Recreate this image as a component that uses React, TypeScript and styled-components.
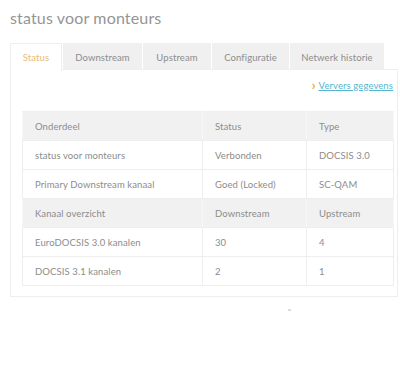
import styled, { createGlobalStyle } from "styled-components";

const GlobalStyle = createGlobalStyle`
  body {
    margin: 0;
    background: #ffffff;
    font-family: Lato, "Open Sans", sans-serif;
  }
`;

const Page = styled.div`
  padding: 8px 2px 0 10px;
  width: 400px;
  box-sizing: border-box;
`;

const Title = styled.h1`
  margin: 0 0 16px;
  font-size: 16px;
  font-weight: 400;
  color: #959595;
  line-height: 19px;
  letter-spacing: 0.15px;
`;

const TabBar = styled.div`
  display: flex;
  gap: 1px;
  height: 27px;
`;

const Tab = styled.div<{ $active?: boolean; $w: number }>`
  width: ${({ $w }) => $w}px;
  box-sizing: border-box;
  display: flex;
  align-items: center;
  justify-content: center;
  font-size: 9.5px;
  letter-spacing: 0.1px;
  color: ${({ $active }) => ($active ? "#e6bc78" : "#8c8c8c")};
  background: ${({ $active }) => ($active ? "#ffffff" : "#f0f0f0")};
  border: 1px solid ${({ $active }) => ($active ? "#eeeeee" : "#f0f0f0")};
  border-bottom: none;
  position: relative;
  z-index: 1;
  height: ${({ $active }) => ($active ? "28px" : "27px")};
`;

const Panel = styled.div`
  border: 1px solid #eeeeee;
  margin-top: -1px;
  padding: 8px 4px 10px 11px;
  width: 388px;
  box-sizing: border-box;
  height: 228px;
`;

const LinkRow = styled.div`
  display: flex;
  justify-content: flex-end;
  align-items: center;
  gap: 3px;
  height: 14px;
  margin-bottom: 19px;
`;

const Chevron = styled.span`
  color: #e8a33d;
  font-size: 13px;
  font-weight: 700;
  line-height: 1;
`;

const Refresh = styled.a`
  color: #55b8d0;
  font-size: 9.5px;
  letter-spacing: 0.1px;
  text-decoration: underline;
  cursor: pointer;
`;

const Table = styled.table`
  width: 371px;
  border-collapse: collapse;
  table-layout: fixed;
  font-size: 9.5px;
  letter-spacing: 0.1px;
  color: #8c8c8c;
`;

const Row = styled.tr<{ $head?: boolean }>`
  height: 29px;
  background: ${({ $head }) => ($head ? "#f1f1f1" : "#ffffff")};
`;

const Cell = styled.td<{ $head?: boolean }>`
  padding: 0 12px;
  border: 1px solid ${({ $head }) => ($head ? "#f7f7f7" : "#eeeeee")};
  border-top-color: #eeeeee;
  border-bottom-color: #eeeeee;
  white-space: nowrap;
`;

const Col = styled.col<{ $w: number }>`
  width: ${({ $w }) => $w}px;
`;

const Dot = styled.div`
  margin: 12px 0 0 278px;
  width: 3px;
  height: 2px;
  background: #dddddd;
`;

const tabs = [
  { label: "Status", w: 52, active: true },
  { label: "Downstream", w: 79 },
  { label: "Upstream", w: 68 },
  { label: "Configuratie", w: 77 },
  { label: "Netwerk historie", w: 94 },
];

const rows = [
  { head: true, cells: ["Onderdeel", "Status", "Type"] },
  { cells: ["status voor monteurs", "Verbonden", "DOCSIS 3.0"] },
  { cells: ["Primary Downstream kanaal", "Goed (Locked)", "SC-QAM"] },
  { head: true, cells: ["Kanaal overzicht", "Downstream", "Upstream"] },
  { cells: ["EuroDOCSIS 3.0 kanalen", "30", "4"] },
  { cells: ["DOCSIS 3.1 kanalen", "2", "1"] },
];

const widths = [180, 104, 87];

export default function App() {
  return (
    <>
      <GlobalStyle />
      <Page>
        <Title>status voor monteurs</Title>
        <TabBar>
          {tabs.map((t) => (
            <Tab key={t.label} $active={t.active} $w={t.w}>
              {t.label}
            </Tab>
          ))}
        </TabBar>
        <Panel>
          <LinkRow>
            <Chevron>›</Chevron>
            <Refresh>Ververs gegevens</Refresh>
          </LinkRow>
          <Table>
            <colgroup>
              {widths.map((w, i) => (
                <Col key={i} $w={w} />
              ))}
            </colgroup>
            <tbody>
              {rows.map((r, i) => (
                <Row key={i} $head={r.head}>
                  {r.cells.map((c, j) => (
                    <Cell key={j} $head={r.head}>
                      {c}
                    </Cell>
                  ))}
                </Row>
              ))}
            </tbody>
          </Table>
        </Panel>
        <Dot />
      </Page>
    </>
  );
}
